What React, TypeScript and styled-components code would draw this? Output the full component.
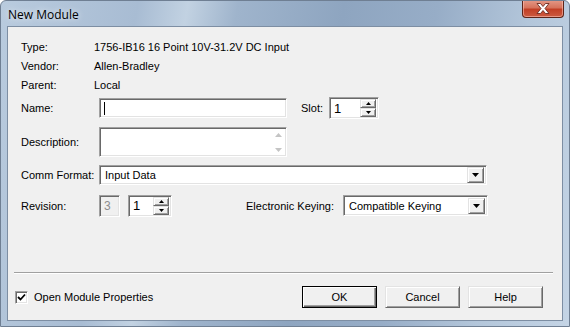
import React from 'react';
import styled, { createGlobalStyle, css } from 'styled-components';

const GlobalStyle = createGlobalStyle`
  html, body { margin:0; padding:0; background:#fff; }
  body { font-family:"Liberation Sans", Arial, sans-serif; font-size:11px; color:#000; }
`;

/*----------3d borders--------------------*/
const sunken = css`
  box-sizing:border-box;
  background:#fff;
  border:1px solid;
  border-color:#a0a0a0 #fff #fff #a0a0a0;
  box-shadow:inset 1px 1px 0 #696969, inset -1px -1px 0 #e3e3e3;
`;

const raised = css`
  box-sizing:border-box;
  background:#f0f0f0;
  border:1px solid;
  border-color:#e3e3e3 #696969 #696969 #e3e3e3;
  box-shadow:inset 1px 1px 0 #fff, inset -1px -1px 0 #a0a0a0;
`;

/*----------Window--------------------*/
const Window = styled.div`
  width:570px;
  height:327px;
  box-sizing:border-box;
  display:flex;
  flex-direction:column;
  border:1px solid #6f7f93;
  border-radius:6px 6px 0 0;
  overflow:hidden;
  background:linear-gradient(100deg, #b9cbde 0%, #a8bcd3 22%, #c2d2e2 30%, #9fb4cc 38%, #8ea5c0 55%, #97adc7 70%, #b3c6da 85%, #c4d4e5 100%);
`;

const TitleBar = styled.div`
  height:25px;
  flex-shrink:0;
  display:flex;
  justify-content:space-between;
  align-items:flex-start;
`;

const Title = styled.span`
  font-family:"Open Sans", "Noto Sans", sans-serif;
  font-size:12px;
  line-height:16px;
  margin:6px 0 0 7px;
  color:#000;
  text-shadow:0 0 6px rgba(255,255,255,0.9);
`;

const CloseButton = styled.div`
  width:42px;
  height:18px;
  margin:-1px 5px 0 0;
  box-sizing:border-box;
  border:1px solid #5d2419;
  border-top:none;
  border-radius:0 0 4px 4px;
  background:linear-gradient(180deg, #e59a88 0%, #d6735c 45%, #c23f25 55%, #cc5b41 100%);
  box-shadow:inset 0 0 0 1px rgba(255,200,190,0.55);
  display:flex;
  align-items:center;
  justify-content:center;
`;

/*----------Client--------------------*/
const Client = styled.div`
  flex:1;
  margin:0 6px 5px 6px;
  border:1px solid #7d8ea3;
  background:#f0f0f0;
  display:flex;
  flex-direction:column;
  padding:11px 9px 12px 6px;
`;

const Form = styled.div`
  display:flex;
  flex-direction:column;
  padding-left:7px;
`;

const InfoRow = styled.div`
  display:grid;
  grid-template-columns:73px 1fr;
  height:19px;
  line-height:19px;
  white-space:nowrap;
`;

const Row = styled.div<{ $top: number; $h: number }>`
  display:flex;
  align-items:center;
  margin-top:${p => p.$top}px;
  height:${p => p.$h}px;
`;

const Label = styled.span`
  width:78px;
  flex-shrink:0;
  white-space:nowrap;
`;

const InlineLabel = styled.span<{ $left: number; $w?: number }>`
  margin-left:${p => p.$left}px;
  ${p => (p.$w ? `width:${p.$w}px;` : '')}
  white-space:nowrap;
`;

const TextField = styled.div<{ $w: number; $h: number; $disabled?: boolean }>`
  ${sunken};
  width:${p => p.$w}px;
  height:${p => p.$h}px;
  display:flex;
  align-items:center;
  padding-left:4px;
  background:${p => (p.$disabled ? '#f0f0f0' : '#fff')};
  color:${p => (p.$disabled ? '#8d8d8d' : '#000')};
  ${p => p.$disabled && 'font-size:12px;'}
`;

const Caret = styled.span`
  width:1px;
  height:13px;
  background:#000;
`;

const TextArea = styled.div`
  ${sunken};
  width:188px;
  height:30px;
  display:flex;
  justify-content:flex-end;
`;

const ScrollArrows = styled.div`
  width:16px;
  display:flex;
  flex-direction:column;
  justify-content:space-between;
  align-items:center;
  padding:5px 0 4px;
`;

const Combo = styled.div<{ $w: number; $h: number }>`
  ${sunken};
  width:${p => p.$w}px;
  height:${p => p.$h}px;
  display:flex;
  align-items:center;
  justify-content:space-between;
  padding:2px 2px 2px 5px;
`;

const DropButton = styled.div`
  ${raised};
  width:17px;
  height:16px;
  display:flex;
  align-items:center;
  justify-content:center;
`;

const Spin = styled.div<{ $w: number }>`
  ${sunken};
  width:${p => p.$w}px;
  height:22px;
  display:flex;
  align-items:center;
  justify-content:space-between;
  padding:2px 2px 2px 4px;
  font-size:13px;
`;

const SpinButtons = styled.div`
  display:flex;
  flex-direction:column;
  height:18px;
`;

const SpinButton = styled.div`
  ${raised};
  width:16px;
  height:9px;
  display:flex;
  align-items:center;
  justify-content:center;
`;

const Separator = styled.div`
  margin-top:auto;
  height:1px;
  background:#a0a0a0;
  border-bottom:1px solid #fff;
`;

const BottomRow = styled.div`
  display:flex;
  align-items:center;
  justify-content:space-between;
  margin-top:12px;
  padding-left:1px;
`;

const CheckRow = styled.label`
  display:flex;
  align-items:center;
  gap:6px;
`;

const CheckBox = styled.div`
  ${sunken};
  width:13px;
  height:13px;
  display:flex;
  align-items:center;
  justify-content:center;
`;

const Buttons = styled.div`
  display:flex;
  gap:8px;
  margin-right:10px;
`;

const Button = styled.div<{ $default?: boolean }>`
  ${raised};
  width:75px;
  height:22px;
  display:flex;
  align-items:center;
  justify-content:center;
  ${p => p.$default && css`
    border-color:#000;
    box-shadow:inset 1px 1px 0 #fff, inset -1px -1px 0 #696969, inset -2px -2px 0 #a0a0a0;
  `}
`;

/*----------Icons--------------------*/
const Tri: React.FC<{ down?: boolean; size?: number; color?: string }> = ({ down, size = 7, color = '#000' }) => {
  const h = Math.ceil(size / 2);
  return (
    <svg width={size} height={h} viewBox={`0 0 ${size} ${h}`}>
      {down
        ? <polygon points={`0,0 ${size},0 ${size / 2},${h}`} fill={color} />
        : <polygon points={`0,${h} ${size},${h} ${size / 2},0`} fill={color} />}
    </svg>
  );
};

const CloseX = () => (
  <svg width="14" height="11" viewBox="0 0 14 11">
    <path d="M1 0.5 L4.5 0.5 L7 3.5 L9.5 0.5 L13 0.5 L9 5.5 L13 10.5 L9.5 10.5 L7 7.5 L4.5 10.5 L1 10.5 L5 5.5 Z"
      fill="#fff" stroke="#6b2a20" strokeWidth="0.9" strokeLinejoin="round" />
  </svg>
);

const Check = () => (
  <svg width="9" height="9" viewBox="0 0 9 9">
    <path d="M1 4 L3.5 6.5 L8 1.5" fill="none" stroke="#000" strokeWidth="1.8" />
  </svg>
);

const SpinControl: React.FC<{ value: string; w: number }> = ({ value, w }) => (
  <Spin $w={w}>
    <span>{value}</span>
    <SpinButtons>
      <SpinButton><Tri size={5} /></SpinButton>
      <SpinButton><Tri size={5} down /></SpinButton>
    </SpinButtons>
  </Spin>
);

const ComboBox: React.FC<{ value: string; w: number; h: number }> = ({ value, w, h }) => (
  <Combo $w={w} $h={h}>
    <span>{value}</span>
    <DropButton><Tri size={7} down /></DropButton>
  </Combo>
);

const App: React.FC = () => {
  return (
    <>
      <GlobalStyle />
      <Window>
        <TitleBar>
          <Title>New Module</Title>
          <CloseButton><CloseX /></CloseButton>
        </TitleBar>

        <Client>
          <Form>
            <InfoRow><span>Type:</span><span>1756-IB16 16 Point 10V-31.2V DC Input</span></InfoRow>
            <InfoRow><span>Vendor:</span><span>Allen-Bradley</span></InfoRow>
            <InfoRow><span>Parent:</span><span>Local</span></InfoRow>

            <Row $top={2} $h={22}>
              <Label>Name:</Label>
              <TextField $w={188} $h={20}><Caret /></TextField>
              <InlineLabel $left={14} $w={28}>Slot:</InlineLabel>
              <SpinControl value="1" w={50} />
            </Row>

            <Row $top={8} $h={30}>
              <Label>Description:</Label>
              <TextArea>
                <ScrollArrows>
                  <Tri size={7} color="#c4c4c4" />
                  <Tri size={7} color="#c4c4c4" down />
                </ScrollArrows>
              </TextArea>
            </Row>

            <Row $top={8} $h={20}>
              <Label>Comm Format:</Label>
              <ComboBox value="Input Data" w={388} h={20} />
            </Row>

            <Row $top={9} $h={23}>
              <Label>Revision:</Label>
              <TextField $w={21} $h={22} $disabled>3</TextField>
              <span style={{ width: 8 }} />
              <SpinControl value="1" w={44} />
              <InlineLabel $left={74} $w={97}>Electronic Keying:</InlineLabel>
              <ComboBox value="Compatible Keying" w={145} h={21} />
            </Row>
          </Form>

          <Separator />

          <BottomRow>
            <CheckRow>
              <CheckBox><Check /></CheckBox>
              <span>Open Module Properties</span>
            </CheckRow>
            <Buttons>
              <Button $default>OK</Button>
              <Button>Cancel</Button>
              <Button>Help</Button>
            </Buttons>
          </BottomRow>
        </Client>
      </Window>
    </>
  );
};

export default App;
